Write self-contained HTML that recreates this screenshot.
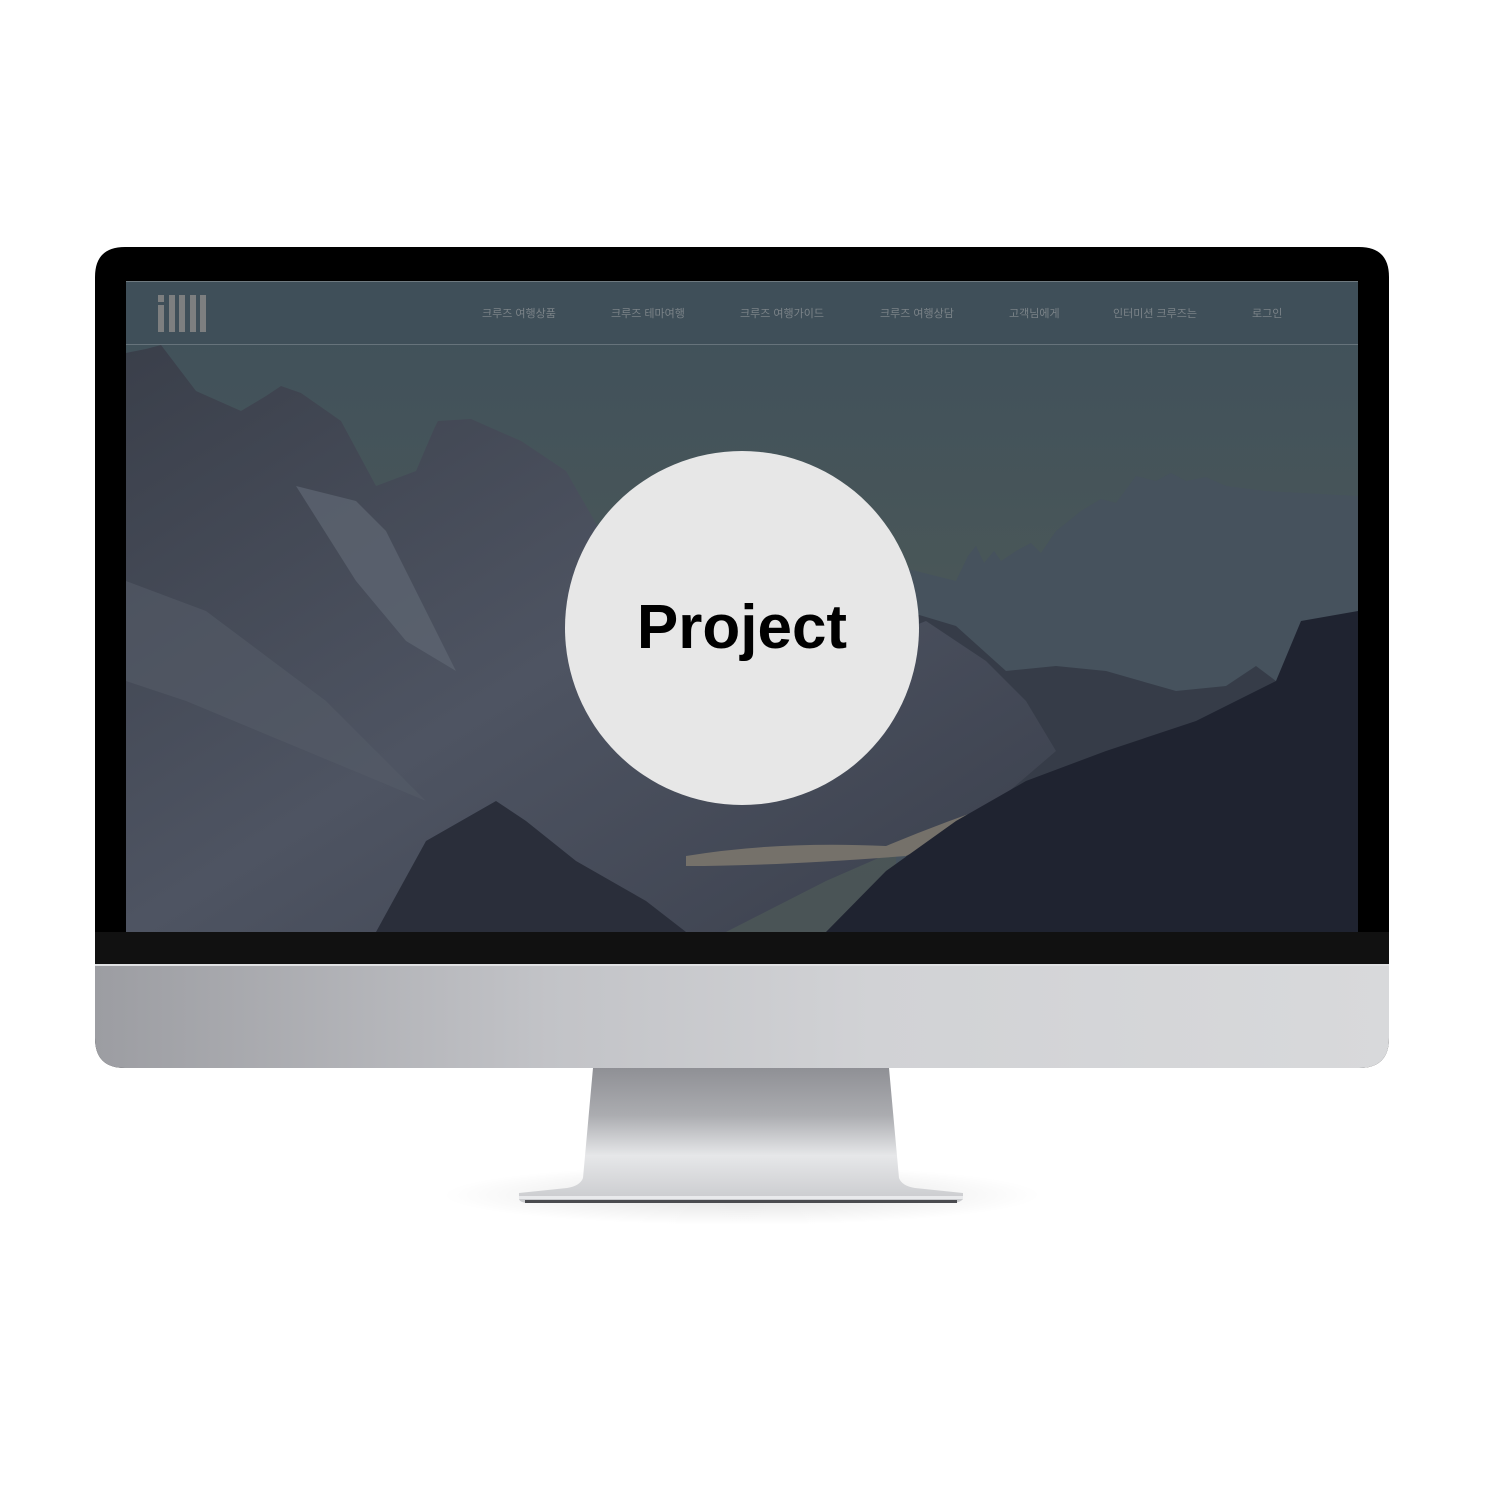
<!DOCTYPE html>
<html><head><meta charset="utf-8"><style>
html,body{margin:0;padding:0;background:#fff;}
body{width:1485px;height:1485px;position:relative;overflow:hidden;font-family:"Liberation Sans","Noto Sans CJK KR",sans-serif;}
.abs{position:absolute;}
.nav{position:absolute;top:305px;font-size:11px;color:#7b8388;white-space:nowrap;}
</style></head><body>
<svg class="abs" style="left:0;top:0" width="1485" height="1485">
<defs>
<linearGradient id="st" x1="0" y1="0" x2="0" y2="1">
<stop offset="0" stop-color="#8f9095"/><stop offset="0.35" stop-color="#abacb0"/><stop offset="0.65" stop-color="#e6e7e9"/><stop offset="1" stop-color="#c9cacd"/></linearGradient>
<radialGradient id="sh" cx="0.5" cy="0.5" r="0.5"><stop offset="0" stop-color="#000" stop-opacity="0.12"/><stop offset="1" stop-color="#000" stop-opacity="0"/></radialGradient>
<linearGradient id="chin" x1="0" y1="0" x2="1" y2="0"><stop offset="0" stop-color="#9c9da2"/><stop offset="0.35" stop-color="#c2c3c7"/><stop offset="0.6" stop-color="#d1d2d5"/><stop offset="1" stop-color="#d8d9db"/></linearGradient>
</defs>
<ellipse cx="742" cy="1195" rx="300" ry="30" fill="url(#sh)"/>
<path d="M593 1068 L889 1068 L899 1178 Q902 1186 915 1188 L963 1193 L963 1199 Q960 1203 950 1203 L530 1203 Q520 1203 519 1199 L519 1193 L567 1188 Q580 1186 583 1178 Z" fill="url(#st)"/>
<rect x="519" y="1196" width="444" height="3" fill="#e9eaec"/>
<rect x="525" y="1200" width="432" height="3" fill="#4a4b4f"/>
<path d="M125 247 H1359 Q1389 247 1389 277 V1038 Q1389 1068 1359 1068 H125 Q95 1068 95 1038 V277 Q95 247 125 247 Z" fill="#000"/>
<rect x="95" y="932" width="1294" height="32" fill="#111"/>
<path d="M95 964 H1389 V1038 Q1389 1068 1359 1068 H125 Q95 1068 95 1038 Z" fill="url(#chin)"/>
<rect x="95" y="964" width="1294" height="2" fill="#e0e1e3"/>
</svg>
<svg class="abs" style="left:126px;top:281px" width="1232" height="651" viewBox="0 0 1232 651">
<defs>
<linearGradient id="sky" x1="0" y1="0" x2="0" y2="1"><stop offset="0" stop-color="#3f505b"/><stop offset="0.5" stop-color="#4a5758"/><stop offset="1" stop-color="#4a5456"/></linearGradient>
<linearGradient id="lm" x1="0" y1="0" x2="1" y2="1"><stop offset="0" stop-color="#3a3f4a"/><stop offset="0.5" stop-color="#4e5462"/><stop offset="1" stop-color="#3a3f4c"/></linearGradient>
</defs>
<rect width="1232" height="651" fill="url(#sky)"/>
<path d="M770 285 L830 300 L842 275 L850 265 L858 282 L868 270 L875 280 L890 270 L905 262 L915 272 L930 250 L955 230 L975 218 L990 222 L1010 195 L1030 200 L1045 192 L1060 200 L1080 196 L1100 205 L1140 210 L1232 215 L1232 651 L770 651 Z" fill="#46525d"/>
<path d="M780 330 L830 345 L880 390 L930 385 L980 390 L1050 410 L1100 405 L1130 385 L1150 400 L1180 380 L1232 360 L1232 651 L780 651 Z" fill="#363c48"/>
<path d="M0 72 L20 68 L35 64 L70 110 L115 130 L140 115 L155 105 L175 112 L215 140 L250 205 L290 190 L308 148 L312 140 L345 138 L395 160 L440 190 L480 260 L500 330 L520 380 L600 400 L700 380 L800 340 L860 380 L900 420 L930 470 L860 530 L700 600 L600 651 L0 651 Z" fill="url(#lm)"/>
<path d="M170 205 L230 220 L260 250 L300 330 L330 390 L280 360 L230 300 Z" fill="#5d6470" opacity="0.8"/>
<path d="M0 300 L80 330 L200 420 L300 520 L180 470 L60 420 L0 400 Z" fill="#555b68" opacity="0.6"/>
<path d="M560 575 Q650 560 760 565 Q820 540 880 520 L880 528 Q830 550 780 575 Q650 585 560 585 Z" fill="#75716a"/>
<path d="M760 590 L830 540 L900 500 L980 470 L1070 440 L1150 400 L1175 340 L1232 330 L1232 651 L700 651 Z" fill="#1f2330"/>
<path d="M300 560 L370 520 L400 540 L450 580 L520 620 L560 651 L250 651 Z" fill="#2a2e3a"/>
<rect y="0" width="1232" height="64" fill="#3f4f59" opacity="0.85"/>
<rect y="63" width="1232" height="1" fill="#66737b"/>
<rect y="0" width="1232" height="1" fill="#6f7a80"/>
<g fill="#7d7f80">
<rect x="32" y="14" width="6" height="7"/><rect x="32" y="24" width="6" height="27"/>
<rect x="43" y="14" width="6" height="37"/><rect x="53" y="14" width="6" height="37"/><rect x="64" y="14" width="6" height="37"/><rect x="74" y="14" width="6" height="37"/>
</g>
</svg>
<div class="nav" style="left:482px">크루즈 여행상품</div>
<div class="nav" style="left:611px">크루즈 테마여행</div>
<div class="nav" style="left:740px">크루즈 여행가이드</div>
<div class="nav" style="left:880px">크루즈 여행상담</div>
<div class="nav" style="left:1009px">고객님에게</div>
<div class="nav" style="left:1113px">인터미션 크루즈는</div>
<div class="nav" style="left:1252px">로그인</div>
<div class="abs" style="left:565px;top:451px;width:354px;height:354px;border-radius:50%;background:#e7e7e7;"></div>
<div class="abs" style="left:565px;top:590px;width:354px;text-align:center;font-size:62px;font-weight:bold;color:#000;line-height:76px;">Project</div>
</body></html>
